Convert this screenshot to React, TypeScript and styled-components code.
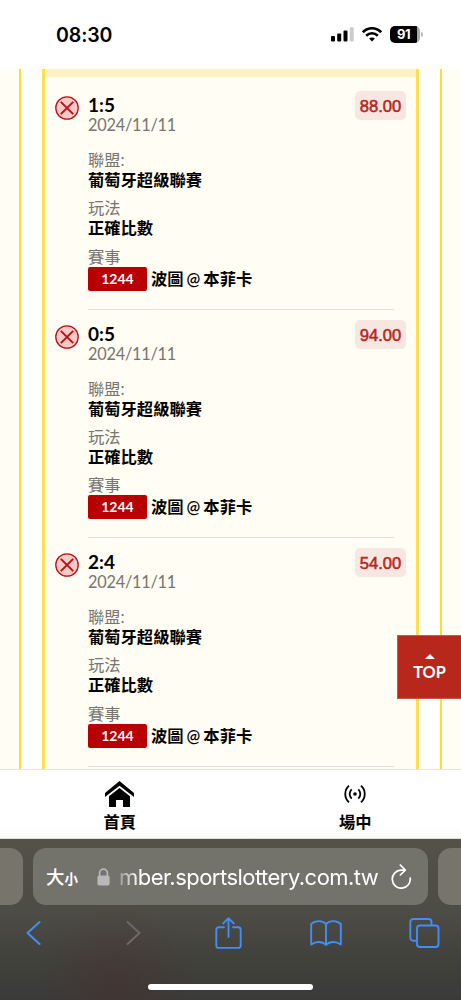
import React from "react";
import styled, { createGlobalStyle } from "styled-components";

const GlobalStyle = createGlobalStyle`
  *, *::before, *::after { box-sizing: border-box; }
  body {
    margin: 0;
    background: #fff;
    color: #000;
    font-family: Lato, "Noto Sans CJK TC", sans-serif;
    overflow: hidden;
  }
  svg { display: block; flex: none; }
`;

const Screen = styled.div`
  width: 461px;
  height: 1000px;
  display: flex;
  flex-direction: column;
  overflow: hidden;
  position: relative;
`;

const StatusBar = styled.header`
  height: 69px;
  flex: none;
  display: flex;
  align-items: center;
  justify-content: space-between;
  padding: 0 38px 0 56px;
  background: #fff;
`;

const Clock = styled.span`
  font: 600 19.5px/24px Inter, sans-serif;
  letter-spacing: -0.1px;
`;

const StatusIcons = styled.div`
  display: flex;
  align-items: center;
  gap: 8px;
`;

const Battery = styled.div`
  display: flex;
  align-items: center;
  gap: 1px;
`;

const BatteryLevel = styled.span`
  width: 30px;
  height: 17px;
  border-radius: 5px;
  background: linear-gradient(90deg, #000 27px, #a8a8a8 27px);
  color: #fff;
  font: 700 13px/17px Inter, sans-serif;
  letter-spacing: -0.4px;
  padding-left: 7px;
`;

const BatteryTip = styled.span`
  width: 2px;
  height: 5px;
  border-radius: 0 2px 2px 0;
  background: #bbb;
`;

const Carousel = styled.main`
  height: 700px;
  flex: none;
  display: flex;
  justify-content: space-between;
  overflow: hidden;
`;

const Peek = styled.div<{ $side: "left" | "right" }>`
  width: 21px;
  background: #fffdf4;
  border: 0 solid #ffdb35;
  border-width: ${({ $side }) => ($side === "left" ? "0 2px 0 0" : "0 0 0 2px")};
`;

const Card = styled.section`
  width: 377px;
  background: #fffdf4;
  border: solid #ffdf4d;
  border-width: 0 3px;
  overflow: hidden;
`;

const CardBand = styled.div`
  height: 8px;
  background: #fff0c8;
`;

const BetList = styled.div`
  padding: 4px 10px 0 10px;
`;

const BetItem = styled.article`
  height: 228.6px;
  display: flex;
  align-items: flex-start;
  padding-top: 14px;
`;

const MarkSlot = styled.div`
  width: 33px;
  flex: none;
  padding-top: 1px;
`;

const BetBody = styled.div`
  width: 306px;
  height: 214.6px;
  flex: none;
  border-bottom: 1px solid #e4e1dc;
  font-size: 16.3px;
  line-height: 20px;
`;

const Pick = styled.div`
  font-size: 19px;
  font-weight: 700;
`;

const Muted = styled.div`
  color: #77756f;
`;

const PlacedOn = styled(Muted)`
  letter-spacing: -0.22px;
`;

const Field = styled.div<{ $gap: number }>`
  margin-top: ${({ $gap }) => $gap}px;
`;

const Value = styled.div`
  font-weight: 700;
`;

const Match = styled.div`
  display: flex;
  align-items: center;
  gap: 4px;
  height: 24px;
  white-space: nowrap;
`;

const MatchCode = styled.span`
  width: 59px;
  height: 24px;
  border-radius: 2px;
  background: #b90000;
  color: #fff;
  font-size: 14px;
  font-weight: 700;
  line-height: 24px;
  text-align: center;
`;

const Teams = styled.span`
  font-weight: 600;
  word-spacing: -1px;
`;

const Odds = styled.div`
  width: 51px;
  height: 29px;
  flex: none;
  margin: -4px 0 0 -39px;
  border-radius: 5px;
  background: #f8e7e1;
  color: #b7271c;
  font: 400 16.6px/31px "Liberation Sans", sans-serif;
  -webkit-text-stroke: 0.55px #b7271c;
  text-align: center;
`;

const TopButton = styled.button`
  position: absolute;
  right: 0;
  top: 635px;
  width: 64px;
  height: 64px;
  padding: 18px 0 0;
  border: 1px solid #c65a4e;
  border-right: 0;
  background: #b7271c;
  color: #fff;
  display: flex;
  flex-direction: column;
  align-items: center;
  justify-content: flex-start;
  gap: 3px;
  font: 700 16.3px/20px Lato, sans-serif;
`;

const SiteNav = styled.nav`
  height: 70px;
  flex: none;
  display: flex;
  padding-left: 2px;
  border-top: 1px solid #e5e5e5;
  border-bottom: 1px solid #ddd;
  background: linear-gradient(#fff 85%, #f9f9f9);
`;

const NavItem = styled.a`
  width: 235.5px;
  flex: none;
  display: flex;
  flex-direction: column;
  align-items: center;
  padding-top: 9px;
  font: 600 16.3px/24px "Noto Sans CJK TC", sans-serif;
`;

const NavIcon = styled.div`
  height: 30px;
  display: flex;
  align-items: center;
  padding-bottom: 1px;
`;

const BrowserChrome = styled.footer`
  height: 161px;
  flex: none;
  padding-top: 9px;
  background:
    radial-gradient(ellipse 75px 80px at 116px 142px, rgba(76, 44, 42, 0.4), rgba(76, 44, 42, 0.15) 60%, transparent),
    linear-gradient(#535148, #4d4c45 45%, #3f3f3b 80%, #3a3a39);
`;

const TabRow = styled.div`
  display: flex;
  justify-content: space-between;
`;

const TabPeek = styled.div<{ $side: "left" | "right" }>`
  width: 23px;
  height: 57px;
  background: #76746b;
  border-radius: ${({ $side }) => ($side === "left" ? "0 13px 13px 0" : "13px 0 0 13px")};
`;

const AddressBar = styled.div`
  width: 395px;
  height: 57px;
  border-radius: 13px;
  background: #73726b;
  color: #fff;
  display: flex;
  align-items: center;
  padding: 0 16px 0 13px;
`;

const TextSize = styled.span`
  width: 51px;
  font: 500 18.5px/30px "Noto Sans CJK TC", sans-serif;
  white-space: nowrap;

  small {
    font-size: 13.5px;
    font-weight: 700;
  }
`;

const Url = styled.span`
  flex: 1;
  margin-left: 9px;
  font: 400 22px/30px Inter, sans-serif;
  letter-spacing: -0.53px;
  white-space: nowrap;
  mask-image: linear-gradient(90deg, rgba(0, 0, 0, 0.3), #000 20px);
`;

const Toolbar = styled.div`
  height: 57px;
  display: flex;
  align-items: center;
  justify-content: space-between;
  padding: 0 21px 1px 17px;
`;

const ToolButton = styled.a<{ $nudge?: number }>`
  width: 32px;
  display: flex;
  justify-content: center;
  padding-left: ${({ $nudge = 0 }) => $nudge}px;
`;

const HomeIndicator = styled.div`
  width: 165px;
  height: 6px;
  margin: 22px auto 0;
  border-radius: 3px;
  background: #fff;
`;

const LossMark = () => (
  <svg width="24" height="24" viewBox="0 0 24 24">
    <circle cx="12" cy="12" r="11.2" fill="#f4cbc6" stroke="#bd1018" strokeWidth="1.3" />
    <path d="M5.8 5.8 18.2 18.2M18.2 5.8 5.8 18.2" stroke="#bd0c12" strokeWidth="1.9" />
  </svg>
);

const SignalIcon = () => (
  <svg width="23" height="15" viewBox="0 0 23 15">
    <rect x="0" y="9" width="4" height="5.5" rx="1" />
    <rect x="6.2" y="6.5" width="4" height="8" rx="1" />
    <rect x="12.5" y="3.4" width="4" height="11.1" rx="1" />
    <rect x="18.7" y="0.3" width="4" height="14.2" rx="1" fill="#ccc" />
  </svg>
);

const WifiIcon = () => (
  <svg width="20" height="15" viewBox="0 0 20 15" fill="none" stroke="#000" strokeWidth="2.6">
    <path d="M.9 5.3C6-.1 14-.1 19.1 5.3" />
    <path d="M4.2 8.7c3.4-3.3 8.2-3.3 11.6 0" />
    <path d="M7.1 11.5c1.6-1.5 4.2-1.5 5.8 0L10 14.4z" fill="#000" stroke="none" />
  </svg>
);

const HomeIcon = () => (
  <svg width="29" height="26" viewBox="0 0 29 26">
    <path d="M14.5 0 29 12v4L14.5 4.7 0 16v-4z" />
    <path d="M14.5 7 25 15.2V26h-7v-7h-7v7H4V15.2z" />
  </svg>
);

const LiveIcon = () => (
  <svg width="22" height="18" viewBox="0 0 22 18" fill="none" stroke="#000" strokeWidth="1.8">
    <circle cx="11" cy="9" r="1.8" fill="#000" stroke="none" />
    <path d="M7.7 4.4c-2.7 2.5-2.7 6.7 0 9.2M14.3 4.4c2.7 2.5 2.7 6.7 0 9.2" />
    <path d="M5 .7c-5 4.5-5 12.1 0 16.6M17 .7c5 4.5 5 12.1 0 16.6" />
  </svg>
);

const LockIcon = () => (
  <svg width="13" height="18" viewBox="0 0 13 18">
    <path d="M2.6 8V5a3.9 3.9 0 0 1 7.8 0v3" fill="none" stroke="#b9b7b9" strokeWidth="1.7" />
    <rect x="0.4" y="7.5" width="12.2" height="10" rx="1.8" fill="#b9b7b9" />
  </svg>
);

const ReloadIcon = () => (
  <svg width="22" height="25" viewBox="0 0 22 25" fill="none" stroke="#fff" strokeWidth="1.7" strokeLinecap="round" strokeLinejoin="round">
    <path d="M14.8 6.2H11A9 9 0 1 0 20.2 14" />
    <path d="m10.3 1 5 5.2-5 4.8" />
  </svg>
);

const Chevron = ({ forward }: { forward?: boolean }) => (
  <svg width="15" height="24" viewBox="0 0 15 24" fill="none" stroke={forward ? "#6b6965" : "#438df7"} strokeWidth="2" strokeLinecap="round" strokeLinejoin="round">
    <path d={forward ? "m1.5 1 12 11-12 11" : "M13.5 1 1.5 12l12 11"} />
  </svg>
);

const ShareIcon = () => (
  <svg width="27" height="32" viewBox="0 0 27 32" fill="none" stroke="#438df7" strokeWidth="1.9" strokeLinecap="round" strokeLinejoin="round">
    <path d="M9 10.2H3.8a2.5 2.5 0 0 0-2.5 2.5v15.7a2.5 2.5 0 0 0 2.5 2.5h19.4a2.5 2.5 0 0 0 2.5-2.5V12.7a2.5 2.5 0 0 0-2.5-2.5H18" />
    <path d="M13.5 20V1.2M8.2 6.4l5.3-5.2 5.3 5.2" />
  </svg>
);

const BookIcon = () => (
  <svg width="32" height="26" viewBox="0 0 32 26" fill="none" stroke="#438df7" strokeWidth="1.9" strokeLinejoin="round">
    <path d="M16 4.2C13 .4 5.5 0 1.2 4v20.5c4.6-3.5 11.6-3.5 14.8.5 3.2-4 10.2-4 14.8-.5V4C26.5 0 19 .4 16 4.2zV25" />
  </svg>
);

const TabsIcon = () => (
  <svg width="31" height="30" viewBox="0 0 31 30" fill="none" stroke="#438df7" strokeWidth="1.9">
    <path d="M8 22.8H4.3a3 3 0 0 1-3-3V4a3 3 0 0 1 3-3h15.2a3 3 0 0 1 3 3v3.2" />
    <rect x="8" y="7.5" width="21.5" height="21.5" rx="3" />
  </svg>
);

const bets = [
  { pick: "1:5", odds: "88.00" },
  { pick: "0:5", odds: "94.00" },
  { pick: "2:4", odds: "54.00" },
];

export default function App() {
  return (
    <Screen>
      <GlobalStyle />
      <StatusBar>
        <Clock>08:30</Clock>
        <StatusIcons>
          <SignalIcon />
          <WifiIcon />
          <Battery>
            <BatteryLevel>91</BatteryLevel>
            <BatteryTip />
          </Battery>
        </StatusIcons>
      </StatusBar>

      <Carousel>
        <Peek $side="left" />
        <Card>
          <CardBand />
          <BetList>
            {bets.map((bet) => (
              <BetItem key={bet.pick}>
                <MarkSlot>
                  <LossMark />
                </MarkSlot>
                <BetBody>
                  <Pick>{bet.pick}</Pick>
                  <PlacedOn>2024/11/11</PlacedOn>
                  <Field $gap={15}>
                    <Muted>聯盟:</Muted>
                    <Value>葡萄牙超級聯賽</Value>
                  </Field>
                  <Field $gap={8.3}>
                    <Muted>玩法</Muted>
                    <Value>正確比數</Value>
                  </Field>
                  <Field $gap={8.3}>
                    <Muted>賽事</Muted>
                    <Match>
                      <MatchCode>1244</MatchCode>
                      <Teams>波圖 @ 本菲卡</Teams>
                    </Match>
                  </Field>
                </BetBody>
                <Odds>{bet.odds}</Odds>
              </BetItem>
            ))}
          </BetList>
        </Card>
        <Peek $side="right" />
      </Carousel>

      <TopButton>
        <svg width="10" height="5" viewBox="0 0 10 5">
          <path d="M5 0 10 5H0z" fill="#fff" />
        </svg>
        TOP
      </TopButton>

      <SiteNav>
        <NavItem>
          <NavIcon>
            <HomeIcon />
          </NavIcon>
          首頁
        </NavItem>
        <NavItem>
          <NavIcon>
            <LiveIcon />
          </NavIcon>
          場中
        </NavItem>
      </SiteNav>

      <BrowserChrome>
        <TabRow>
          <TabPeek $side="left" />
          <AddressBar>
            <TextSize>
              大<small>小</small>
            </TextSize>
            <LockIcon />
            <Url>mber.sportslottery.com.tw</Url>
            <ReloadIcon />
          </AddressBar>
          <TabPeek $side="right" />
        </TabRow>
        <Toolbar>
          <ToolButton>
            <Chevron />
          </ToolButton>
          <ToolButton $nudge={5}>
            <Chevron forward />
          </ToolButton>
          <ToolButton>
            <ShareIcon />
          </ToolButton>
          <ToolButton>
            <BookIcon />
          </ToolButton>
          <ToolButton>
            <TabsIcon />
          </ToolButton>
        </Toolbar>
        <HomeIndicator />
      </BrowserChrome>
    </Screen>
  );
}
